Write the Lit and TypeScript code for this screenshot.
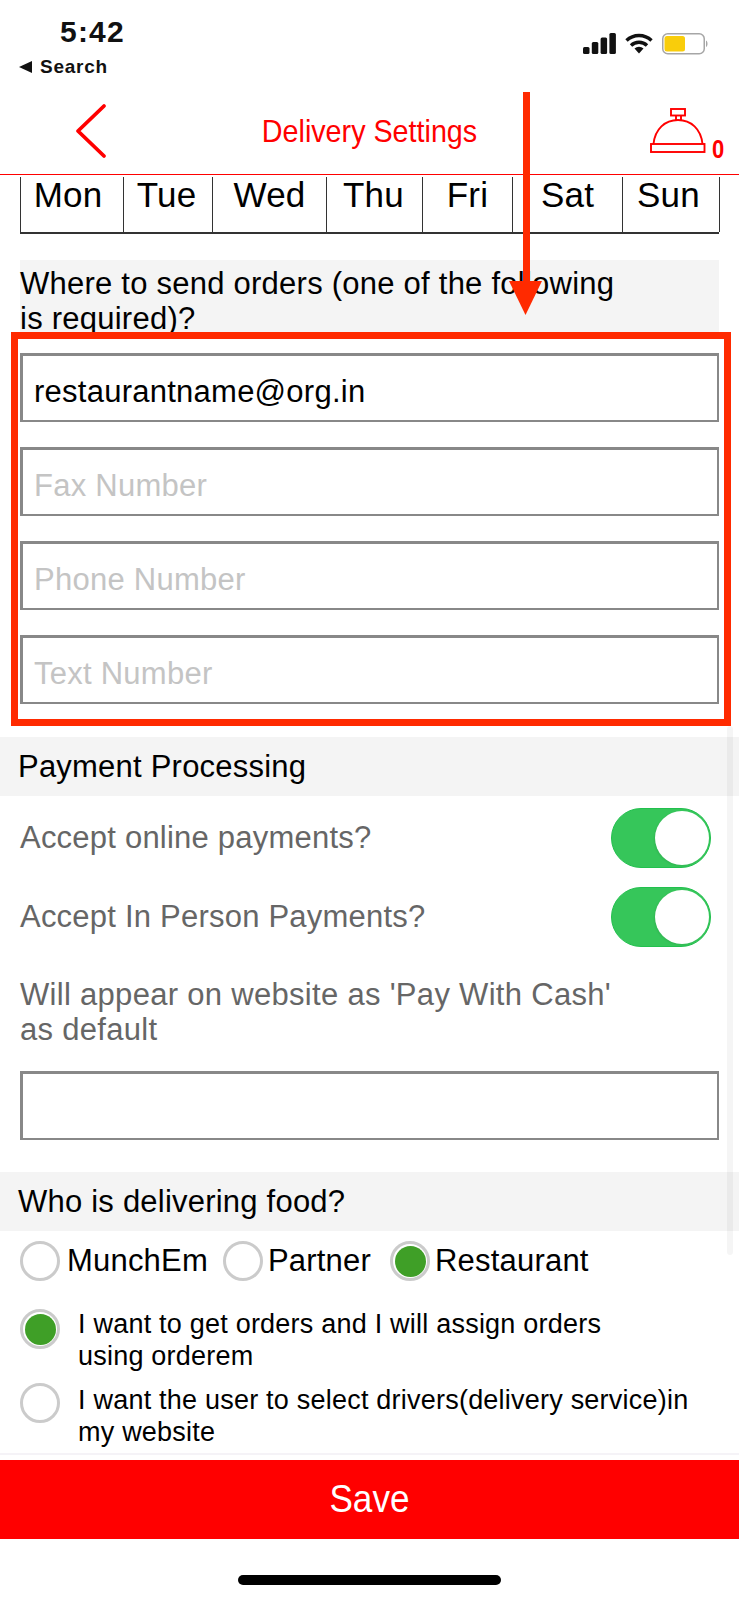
import { LitElement, html, css } from "lit";
import { customElement } from "lit/decorators.js";

const DAYS = [
  ["Mon", 103, 8], ["Tue", 89, 3], ["Wed", 114, 0], ["Thu", 96, 2], ["Fri", 90, 0], ["Sat", 110, 0], ["Sun", 97, 5],
] as const;

@customElement("app-root")
export class AppRoot extends LitElement {
  static styles = css`
    :host { display: block; width: 739px; height: 1600px; background: #fff; font-family: "Liberation Sans", Arial, sans-serif; color: #000; }
    * { box-sizing: border-box; }
    .page { position: relative; width: 739px; height: 1600px; overflow: hidden; display: flex; flex-direction: column; }

    .status { height: 88px; flex: none; display: flex; justify-content: space-between; }
    .status-left { padding-left: 19px; display: flex; flex-direction: column; }
    .time { margin: 17px 0 0 41px; font-size: 30px; line-height: 30px; font-weight: 700; letter-spacing: 1.2px; color: #111; }
    .back-app { margin-top: 9px; display: flex; align-items: center; gap: 8px; font-size: 19px; line-height: 22px; font-weight: 700; color: #111; letter-spacing: .75px; }
    .tri { width: 0; height: 0; border-style: solid; border-width: 6px 13px 6px 0; border-color: transparent #111 transparent transparent; }
    .status-right { padding: 33px 30px 0 0; display: flex; gap: 9px; align-items: flex-start; }

    .head { height: 87px; flex: none; border-bottom: 1px solid #f00; display: grid; grid-template-columns: 130px 1fr 130px; align-items: start; }
    .chev { margin: 15px 0 0 74px; }
    .title { margin-top: 25px; text-align: center; color: #f00; font-size: 32px; line-height: 36px; transform: scaleX(.897); white-space: nowrap; }
    .bell { margin: 20px 0 0 41px; display: flex; align-items: flex-end; gap: 6px; }
    .bell b { color: #f00; font-size: 25px; line-height: 21px; margin-bottom: -6px; transform: scaleX(.88); transform-origin: left center; }

    .days { flex: none; margin: 2px 0 0 20px; width: 699px; height: 57px; display: flex; border-bottom: 2px solid #333; border-left: 1.5px solid #333; }
    .day { border-right: 1.5px solid #333; text-align: center; font-size: 35px; letter-spacing: .2px; line-height: 32px; padding-top: 2px; flex: none; }

    .where { flex: none; margin: 26px 0 0 20px; width: 699px; height: 72px; background: #f4f4f4; font-size: 31px; letter-spacing: .24px; line-height: 35px; padding-top: 6px; }

    .box { flex: none; margin-left: 11px; width: 720px; height: 394px; border: 7px solid #ff2a00; padding: 14px 5px 0 2px; display: flex; flex-direction: column; gap: 25px; }
    input { display: block; width: 699px; height: 69px; flex: none; border-style: solid; border-color: #888; border-width: 3px 2px 2px 3px; outline: none; background: #fff; padding: 7px 10px 0 11px; font: 31px "Liberation Sans", sans-serif; letter-spacing: .25px; color: #000; border-radius: 0; }
    input::placeholder { color: #c4c4c4; opacity: 1; }

    .band { flex: none; height: 59px; background: #f4f4f4; padding-left: 18px; font-size: 31px; letter-spacing: .22px; line-height: 60px; }
    .pay { margin-top: 11px; }
    .row { flex: none; margin-left: 20px; width: 691px; height: 60px; display: flex; justify-content: space-between; align-items: center; color: #666; font-size: 31px; letter-spacing: .22px; }
    .pay-first { margin-top: 12px; }
    .row + .row { margin-top: 19px; }
    .toggle { width: 100px; height: 60px; border-radius: 30px; background: #36c65a; border: 1.5px solid #22c04e; position: relative; flex: none; }
    .toggle i { position: absolute; right: 1.5px; top: 1.5px; width: 54px; height: 54px; border-radius: 50%; background: #fff; box-shadow: -1px 1px 2px rgba(0,0,0,.08); }
    .cash { flex: none; margin: 30px 0 0 20px; color: #666; font-size: 31px; letter-spacing: .3px; line-height: 35px; }
    .cash-input { margin: 24px 0 0 20px; }

    .who { margin-top: 32px; padding-left: 18px; }
    .opts { flex: none; margin: 10px 0 0 20px; display: flex; align-items: center; font-size: 31px; letter-spacing: .2px; line-height: 40px; }
    .opt { display: flex; align-items: center; gap: 7px; margin-right: 15px; }
    .opt + .opt { gap: 5px; }
    .opt:nth-child(2) { margin-right: 19px; }
    .radio { width: 40px; height: 40px; border-radius: 50%; border: 3.5px solid #cbcbcb; background: #fff; flex: none; display: block; position: relative; }
    .radio.on::after { content: ""; position: absolute; inset: 1.5px; border-radius: 50%; background: #3f9f27; }
    .choice { flex: none; margin: 27px 0 0 20px; display: flex; gap: 18px; font-size: 27px; letter-spacing: .22px; line-height: 32px; align-items: flex-start; }
    .choice .txt { display: block; }
    .choice .radio { margin-top: 1px; }
    .choice.next { margin-top: 10px; }
    .choice.next .txt { margin-top: 2px; }

    .rule { flex: none; margin-top: 5px; height: 2px; background: #f5f3f7; }
    .save { flex: none; margin-top: 5px; height: 79px; background: #f00; color: #fff; text-align: center; font-size: 39px; line-height: 78px; }
    .save span { display: inline-block; transform: scaleX(.9); }
    .home-wrap { flex: none; padding-top: 36px; display: flex; justify-content: center; }
    .home { width: 263px; height: 10px; border-radius: 5px; background: #000; }

    .scroll { position: absolute; left: 727px; top: 726px; width: 6px; height: 529px; border-radius: 3px; background: rgba(0,0,0,.04); }
    .arrow { position: absolute; left: 505px; top: 92px; }
  `;

  render() {
    return html`
      <div class="page">
        <div class="status">
          <div class="status-left">
            <div class="time">5:42</div>
            <div class="back-app"><span class="tri"></span>Search</div>
          </div>
          <div class="status-right">
            <svg width="33" height="21" viewBox="0 0 33 21"><g fill="#111"><rect x="0" y="14" width="6.500" height="7" rx="1.500"/><rect x="8.800" y="9" width="6.500" height="12" rx="1.500"/><rect x="17.600" y="4.500" width="6.500" height="16.500" rx="1.500"/><rect x="26.400" y="0" width="6.500" height="21" rx="1.500"/></g></svg>
            <svg width="28" height="21" viewBox="0 0 28 21"><path d="M1.500 7.500a18 18 0 0 1 25 0M6 12.500a11.500 11.500 0 0 1 16 0" fill="none" stroke="#111" stroke-width="3.400"/><path d="M9.500 15.500a6.500 6.500 0 0 1 9 0L14 20.500z" fill="#111"/></svg>
            <svg width="47" height="22" viewBox="0 0 47 22"><rect x=".75" y=".75" width="41.500" height="20" rx="5" fill="#fff" stroke="#a6a6a6" stroke-width="1.500"/><rect x="2.500" y="3" width="20.500" height="15.500" rx="2.500" fill="#f9cd0b"/><path d="M44 7.500c2 .8 2 5.700 0 6.500z" fill="#a6a6a6"/></svg>
          </div>
        </div>

        <div class="head">
          <svg class="chev" width="34" height="56" viewBox="0 0 34 56"><path d="M30 3 4 28l26 25" fill="none" stroke="#f00" stroke-width="3.800" stroke-linecap="round" stroke-linejoin="round"/></svg>
          <div class="title">Delivery Settings</div>
          <div class="bell">
            <svg width="56" height="46" viewBox="0 0 56 46" fill="none" stroke="#f00" stroke-width="1.900"><rect x="21" y="1" width="14" height="6.500"/><path d="M26 7.500v5M31 7.500v5"/><path d="M3.500 36C5 21 15 12 28 12s23 9 24.500 24"/><rect x="1" y="36" width="53.500" height="8"/></svg>
            <b>0</b>
          </div>
        </div>

        <div class="days">
          ${DAYS.map(([d, w, p]) => html`<div class="day" style="width:${w}px;padding-right:${p}px">${d}</div>`)}
        </div>

        <div class="where">Where to send orders (one of the following<br />is required)?</div>

        <div class="box">
          <input value="restaurantname@org.in" />
          <input placeholder="Fax Number" />
          <input placeholder="Phone Number" />
          <input placeholder="Text Number" />
        </div>

        <div class="band pay">Payment Processing</div>
        <div class="row pay-first"><span>Accept online payments?</span><span class="toggle"><i></i></span></div>
        <div class="row"><span>Accept In Person Payments?</span><span class="toggle"><i></i></span></div>
        <div class="cash">Will appear on website as 'Pay With Cash'<br />as default</div>
        <input class="cash-input" />

        <div class="band who">Who is delivering food?</div>
        <div class="opts">
          <label class="opt"><span class="radio"></span>MunchEm</label>
          <label class="opt"><span class="radio"></span>Partner</label>
          <label class="opt"><span class="radio on"></span>Restaurant</label>
        </div>
        <div class="choice"><span class="radio on"></span><span class="txt">I want to get orders and I will assign orders<br />using orderem</span></div>
        <div class="choice next"><span class="radio"></span><span class="txt">I want the user to select drivers(delivery service)in<br />my website</span></div>
        <div class="rule"></div>
        <div class="save"><span>Save</span></div>
        <div class="home-wrap"><div class="home"></div></div>

        <div class="scroll"></div>
        <svg class="arrow" width="40" height="226" viewBox="0 0 40 226"><path d="M18 0h7v190h-7z" fill="#ff2a00"/><path d="M4 189h33l-16.500 34z" fill="#ff2a00"/></svg>
      </div>
    `;
  }
}
